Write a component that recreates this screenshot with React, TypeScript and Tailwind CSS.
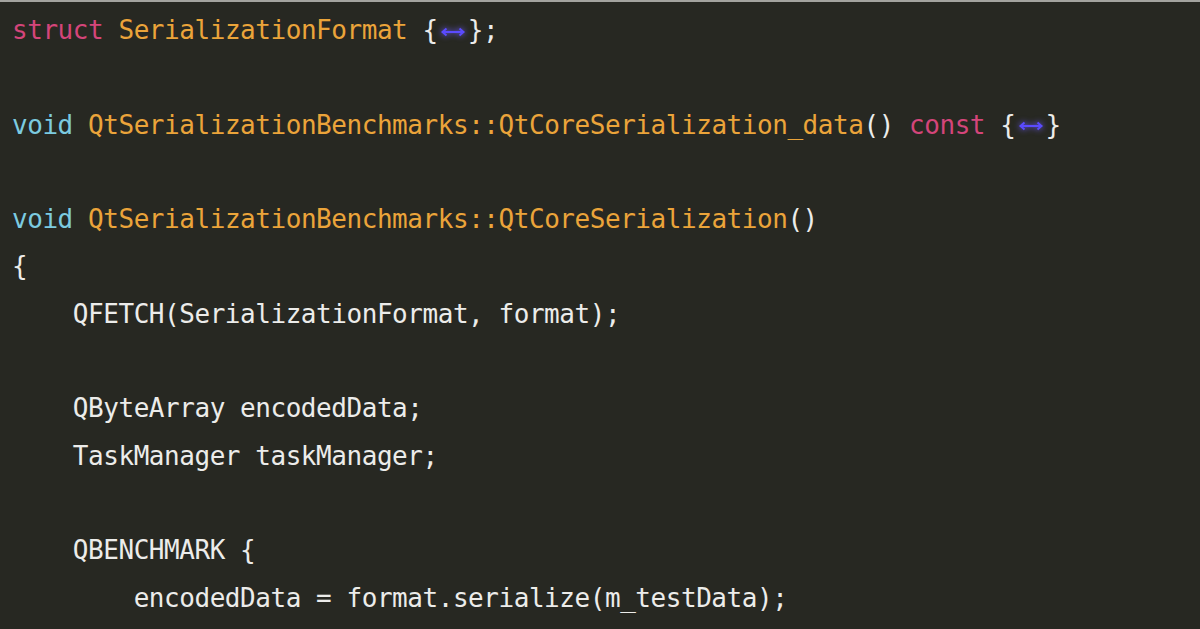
import React from "react";

const Fold = () => (
  <span className="inline-block align-middle mx-[1px]">
    <svg width="28" height="14" viewBox="0 0 28 14" className="drop-shadow-[0_0_3px_#6d5cff]">
      <path d="M5 7h18" stroke="#5b4bff" strokeWidth="2.2" />
      <path d="M7.5 3.5L3.5 7l4 3.5M20.5 3.5l4 3.5-4 3.5" stroke="#5b4bff" strokeWidth="2" fill="none" />
    </svg>
  </span>
);

const K = ({ children }: { children: React.ReactNode }) => <span className="text-[#d4457a]">{children}</span>;
const T = ({ children }: { children: React.ReactNode }) => <span className="text-[#7ccbe0]">{children}</span>;
const O = ({ children }: { children: React.ReactNode }) => <span className="text-[#eba43a]">{children}</span>;

const Line = ({ children }: { children?: React.ReactNode }) => (
  <div className="h-[47.3px] whitespace-pre">{children ?? " "}</div>
);

export default function App() {
  return (
    <div className="w-[1200px] h-[629px] overflow-hidden bg-[#272822] border-t-2 border-[#a3a39f]">
      <div
        className="pt-[5px] pl-[12px] text-[#ececea] text-[26px] leading-[47.3px] tracking-[-0.45px]"
        style={{ fontFamily: '"DejaVu Sans Mono", "Liberation Mono", monospace' }}
      >
        <Line>
          <K>struct</K> <O>SerializationFormat</O> {"{"}<Fold />{"};"}
        </Line>
        <Line />
        <Line>
          <T>void</T> <O>QtSerializationBenchmarks::QtCoreSerialization_data</O>() <K>const</K> {"{"}<Fold />{"}"}
        </Line>
        <Line />
        <Line>
          <T>void</T> <O>QtSerializationBenchmarks::QtCoreSerialization</O>()
        </Line>
        <Line>{"{"}</Line>
        <Line>{"    QFETCH(SerializationFormat, format);"}</Line>
        <Line />
        <Line>{"    QByteArray encodedData;"}</Line>
        <Line>{"    TaskManager taskManager;"}</Line>
        <Line />
        <Line>{"    QBENCHMARK {"}</Line>
        <Line>{"        encodedData = format.serialize(m_testData);"}</Line>
      </div>
    </div>
  );
}
